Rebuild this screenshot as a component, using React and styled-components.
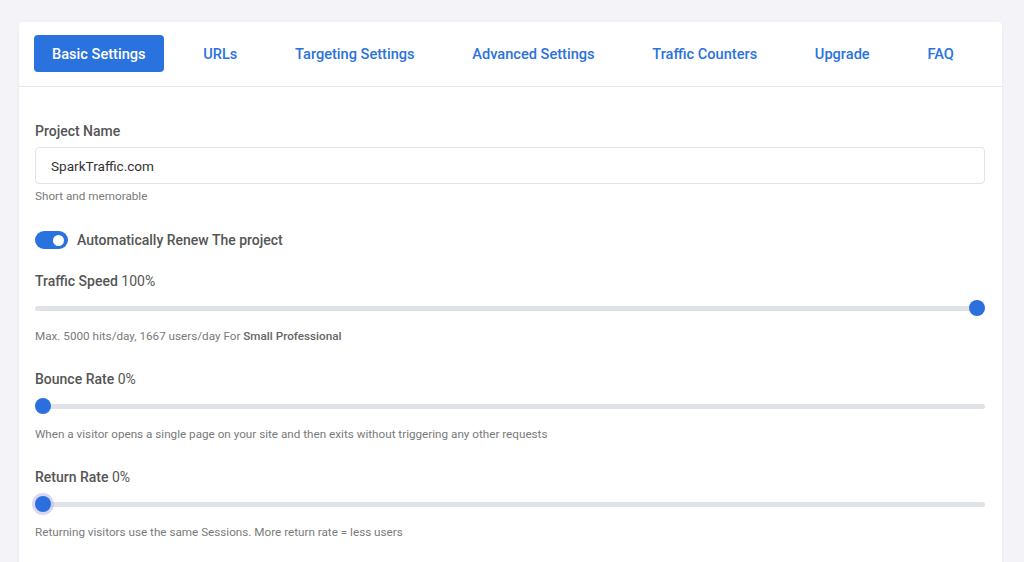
import React, { useState } from "react";
import styled, { createGlobalStyle } from "styled-components";

const GlobalStyle = createGlobalStyle`
  body {
    margin: 0;
    background: #f4f3f7;
    font-family: Roboto, "Liberation Sans", Arial, sans-serif;
  }
`;

const Page = styled.div`
  padding: 22px 22px 0 19px;
  height: 562px;
  box-sizing: border-box;
  overflow: hidden;
`;

const Card = styled.div`
  background: #fff;
  border-radius: 4px;
  box-shadow: 0 1px 3px rgba(40, 30, 80, 0.06);
  min-height: 600px;
`;

const TabBar = styled.div`
  display: flex;
  align-items: center;
  gap: 21.7px;
  padding: 13px 15px 14px;
  border-bottom: 1px solid #e8e8ec;
`;

const Tab = styled.button`
  height: 37px;
  padding: 0 18px;
  border: none;
  border-radius: 4px;
  font-family: inherit;
  font-size: 14.6px;
  font-weight: 500;
  cursor: pointer;
  background: ${({ active }) => (active ? "#2a72de" : "transparent")};
  color: ${({ active }) => (active ? "#fff" : "#2a72de")};
`;

const Body = styled.div`
  padding: 34px 17px 0 16px;
`;

const Label = styled.div`
  font-size: 14px;
  line-height: 20px;
  font-weight: 500;
  color: #555;
`;

const Value = styled.span`
  font-weight: 400;
`;

const Input = styled.input`
  display: block;
  width: 100%;
  box-sizing: border-box;
  height: 37px;
  margin-top: 6px;
  padding: 0 15px;
  border: 1px solid #e3e3e6;
  border-radius: 4px;
  font-family: inherit;
  font-size: 13.6px;
  color: #333;
  outline: none;
`;

const Help = styled.div`
  margin-top: ${({ top }) => top}px;
  font-size: 11.7px;
  line-height: 16px;
  color: #7a7a7a;
  b {
    font-weight: 500;
    color: #666;
  }
`;

const ToggleRow = styled.label`
  display: flex;
  align-items: center;
  gap: 9px;
  margin-top: 26px;
  height: 20px;
  cursor: pointer;
`;

const Switch = styled.span`
  width: 33px;
  height: 18px;
  border-radius: 9px;
  background: ${({ on }) => (on ? "#2a72de" : "#d5d8de")};
  display: flex;
  align-items: center;
  justify-content: ${({ on }) => (on ? "flex-end" : "flex-start")};
  padding: 0 4px;
  box-sizing: border-box;
`;

const Knob = styled.span`
  width: 11px;
  height: 11px;
  border-radius: 50%;
  background: #fff;
`;

const Group = styled.div`
  margin-top: ${({ top }) => top}px;
`;

const SliderBox = styled.div`
  position: relative;
  height: 20px;
  margin-top: 7px;
  display: flex;
  align-items: center;
`;

const Track = styled.div`
  width: 100%;
  height: 5px;
  border-radius: 3px;
  background: #dfe2e6;
`;

const Thumb = styled.div`
  position: absolute;
  top: 2px;
  width: 16px;
  height: 16px;
  border-radius: 50%;
  background: #2a6fdd;
  box-shadow: ${({ focus }) =>
    focus ? "0 0 0 3px rgba(190, 180, 235, 0.55)" : "none"};
`;

const Slider = ({ value, focus }) => (
  <SliderBox>
    <Track />
    <Thumb
      focus={focus}
      style={{ left: `calc(${value / 100} * (100% - 16px))` }}
    />
  </SliderBox>
);

const tabs = [
  "Basic Settings",
  "URLs",
  "Targeting Settings",
  "Advanced Settings",
  "Traffic Counters",
  "Upgrade",
  "FAQ",
];

const App = () => {
  const [active, setActive] = useState("Basic Settings");
  const [renew, setRenew] = useState(true);

  return (
    <Page>
      <GlobalStyle />
      <Card>
        <TabBar>
          {tabs.map((t) => (
            <Tab key={t} active={t === active} onClick={() => setActive(t)}>
              {t}
            </Tab>
          ))}
        </TabBar>
        <Body>
          <Label>Project Name</Label>
          <Input defaultValue="SparkTraffic.com" />
          <Help top={4}>Short and memorable</Help>

          <ToggleRow onClick={() => setRenew(!renew)}>
            <Switch on={renew}>
              <Knob />
            </Switch>
            <Label>Automatically Renew The project</Label>
          </ToggleRow>

          <Group top={21}>
            <Label>
              Traffic Speed <Value>100%</Value>
            </Label>
            <Slider value={100} />
            <Help top={10}>
              Max. 5000 hits/day, 1667 users/day For <b>Small Professional</b>
            </Help>
          </Group>

          <Group top={25}>
            <Label>
              Bounce Rate <Value>0%</Value>
            </Label>
            <Slider value={0} />
            <Help top={10}>
              When a visitor opens a single page on your site and then exits
              without triggering any other requests
            </Help>
          </Group>

          <Group top={25}>
            <Label>
              Return Rate <Value>0%</Value>
            </Label>
            <Slider value={0} focus />
            <Help top={10}>
              Returning visitors use the same Sessions. More return rate = less
              users
            </Help>
          </Group>
        </Body>
      </Card>
    </Page>
  );
};

export default App;
